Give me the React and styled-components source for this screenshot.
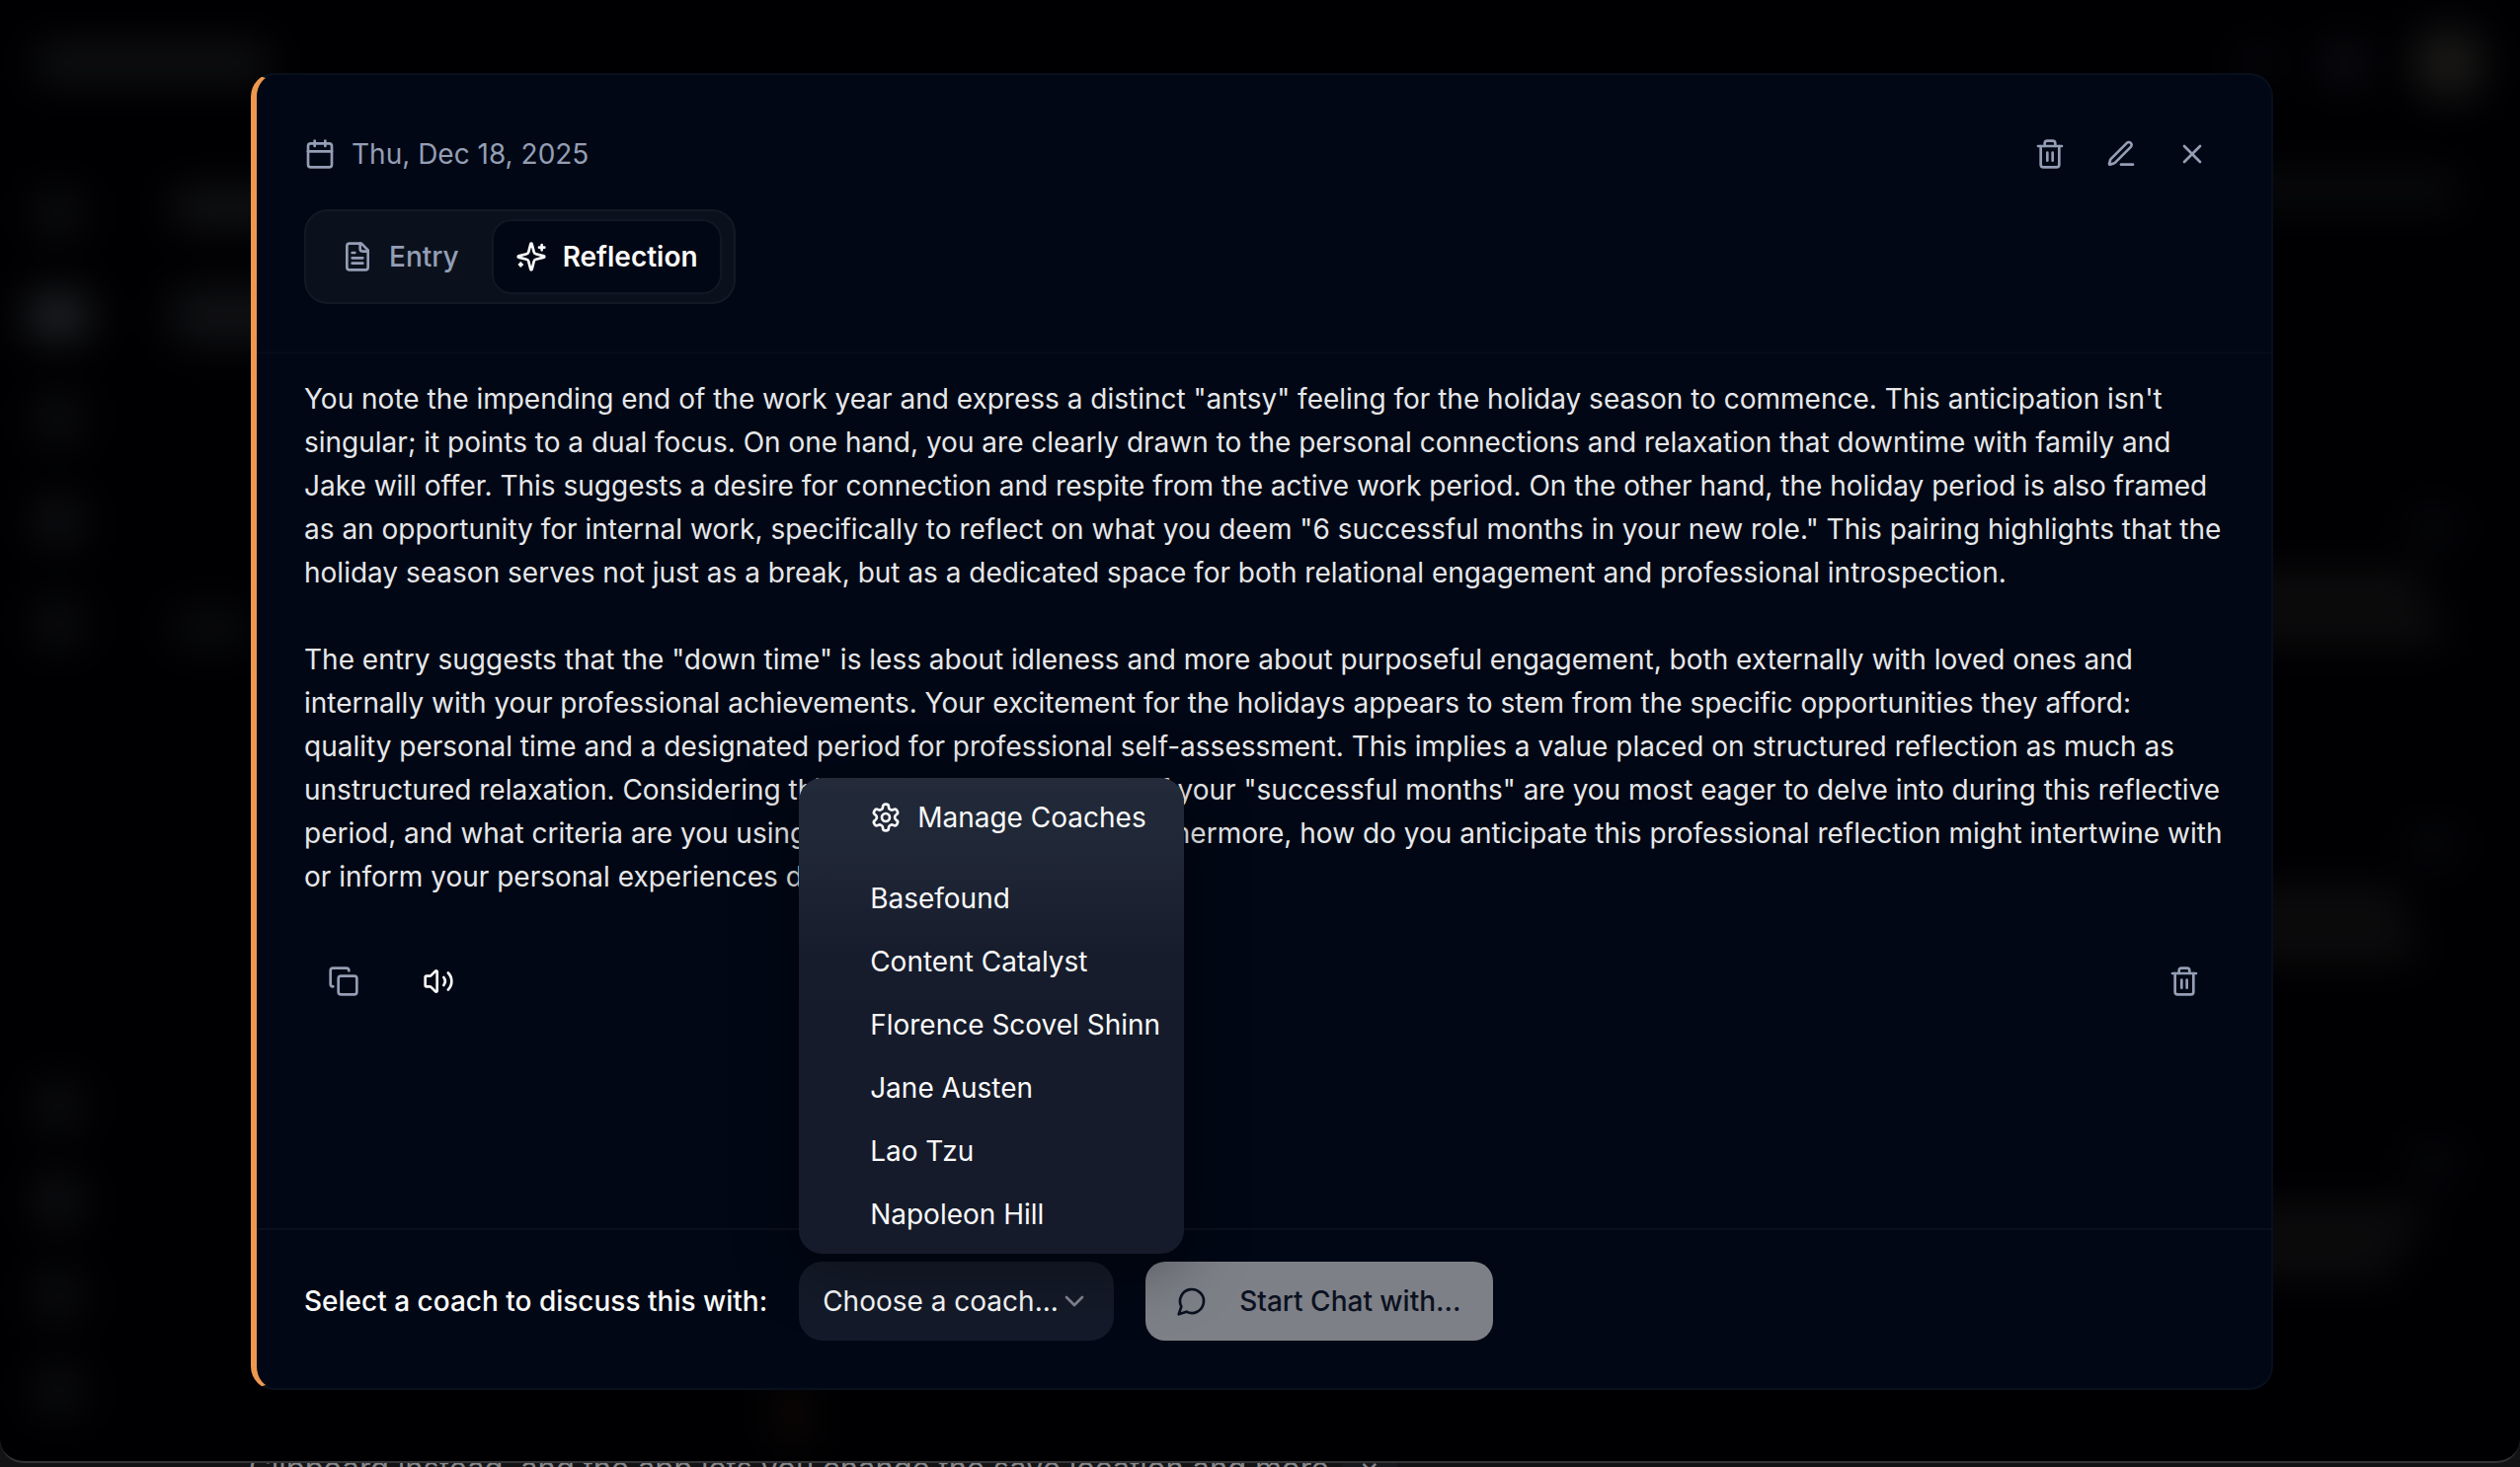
import React, { useState } from 'react';
import styled, { createGlobalStyle, css } from 'styled-components';
import { Calendar, Copy, Trash2, X, ChevronDown } from 'lucide-react';

const GlobalStyle = createGlobalStyle`
  * {
    box-sizing: border-box;
  }
  body {
    margin: 0;
    background: #131315;
    color: #fafafa;
    font-family: Inter, 'Liberation Sans', sans-serif;
    font-size: 28px;
    line-height: 44px;
  }
  button,
  select {
    font: inherit;
    color: inherit;
    border: none;
    background: none;
    padding: 0;
    margin: 0;
    cursor: pointer;
  }
`;

const Page = styled.div`
  display: flex;
  flex-direction: column;
  height: 100vh;
  overflow: hidden;
`;

const AppWindow = styled.div`
  position: relative;
  flex: 1;
  min-height: 0;
  display: flex;
  overflow: hidden;
  background: #000003;
  border-bottom: 2px solid #343436;
  border-radius: 0 0 24px 24px;
`;

const Behind = styled.div`
  height: 4px;
  overflow: hidden;
  display: flex;
  gap: 4px;
  padding-left: 252px;
  color: #86868a;
  font-size: 31px;
  line-height: 10px;
  white-space: nowrap;
`;

const BehindClose = styled.span`
  width: 56px;
  text-align: center;
  background: #17181d;
`;

/* blurred dashboard under the dialog */

const Backdrop = styled.div`
  position: absolute;
  inset: 0;
  display: flex;
  flex-direction: column;
  filter: blur(20px);
`;

const TopBar = styled.div`
  display: flex;
  align-items: center;
  gap: 48px;
  height: 128px;
  padding: 0 36px;
`;

const Columns = styled.div`
  display: flex;
  flex: 1;
  min-height: 0;
`;

const SideColumn = styled.div`
  display: flex;
  flex-direction: column;
  justify-content: space-between;
  width: 118px;
  padding: 64px 0 48px;
`;

const SideGroup = styled.div`
  display: flex;
  flex-direction: column;
  align-items: center;
  gap: ${(props) => props.$gap}px;
`;

const LeftColumn = styled.div`
  display: flex;
  flex-direction: column;
  flex: 1;
  gap: 64px;
  padding: 64px 0 16px 56px;
`;

const RightColumn = styled.div`
  display: flex;
  flex-direction: column;
  align-items: flex-end;
  padding: 48px 64px 0 0;
`;

const Spacer = styled.div`
  flex: ${(props) => (props.$size ? 'none' : 1)};
  height: ${(props) => props.$size || 0}px;
`;

const Blob = styled.div`
  flex: none;
  width: ${(props) => props.$w || 48}px;
  height: ${(props) => props.$h || 48}px;
  border-radius: ${(props) => props.$r || 12}px;
  background: ${(props) => props.$color || '#0c0d0f'};
`;

const BottomGlow = styled(Blob)`
  margin-left: 30%;
`;

const Card = styled.div`
  display: flex;
  flex-direction: column;
  gap: 12px;
  width: 256px;
  height: 337px;
`;

const CardDot = styled(Blob)`
  align-self: flex-end;
  margin-bottom: 16px;
`;

/* dialog */

const Overlay = styled.div`
  position: relative;
  flex: 1;
  display: flex;
  justify-content: center;
  padding: 74px 0 72px 4px;
`;

const Dialog = styled.section`
  display: flex;
  flex-direction: column;
  width: 100%;
  max-width: 2048px;
  background: #010714;
  border: 2px solid #080f1d;
  border-left: 6px solid #ee984f;
  border-radius: 24px;
`;

const DialogHeader = styled.header`
  display: flex;
  flex-direction: column;
  align-items: flex-start;
  gap: 24px;
  padding: 48px;
  border-bottom: 2px solid #050b18;
`;

const HeaderRow = styled.div`
  display: flex;
  justify-content: space-between;
  align-items: center;
  align-self: stretch;
  height: 64px;
`;

const DateLabel = styled.div`
  display: flex;
  align-items: center;
  gap: 16px;
  color: #949eb5;
`;

const Actions = styled.div`
  display: flex;
  gap: ${(props) => props.$gap}px;
`;

const IconButton = styled.button`
  display: flex;
  align-items: center;
  justify-content: center;
  width: ${(props) => (props.$wide ? 80 : 64)}px;
  height: ${(props) => (props.$wide ? 72 : 64)}px;
  color: ${(props) => (props.$bright ? '#fafafa' : '#949eb5')};
`;

const Tabs = styled.div`
  display: flex;
  align-items: center;
  gap: 9px;
  height: 96px;
  padding: 0 12px;
  background: #0b111c;
  border: 2px solid #131925;
  border-radius: 24px;
`;

const Tab = styled.button`
  display: flex;
  align-items: center;
  gap: 16px;
  height: 76px;
  padding: 0 22px;
  border: 2px solid transparent;
  border-radius: 20px;
  font-weight: 500;
  color: #949eb5;
  ${(props) =>
    props.$active &&
    css`
      font-weight: 600;
      color: #fafafa;
      background: #010714;
      border-color: #111724;
    `}
`;

const DialogBody = styled.div`
  flex: 1;
  min-height: 0;
  padding: 24px 48px 0;
`;

const Reflection = styled.div`
  display: flex;
  flex-direction: column;
  gap: 44px;
  color: #e6e7ea;
  p {
    margin: 0;
  }
`;

const BodyActions = styled.div`
  display: flex;
  justify-content: space-between;
  margin-top: 48px;
`;

const DialogFooter = styled.footer`
  display: flex;
  align-items: center;
  gap: 32px;
  padding: 32px 48px 48px;
  border-top: 2px solid #0a101c;
`;

const CoachLabel = styled.label`
  font-weight: 500;
`;

const SelectWrap = styled.div`
  position: relative;
  width: 319px;
`;

const CoachSelect = styled.select`
  appearance: none;
  display: block;
  width: 100%;
  height: 80px;
  padding: 0 48px 0 24px;
  background: #141a29;
  border-radius: 24px;
  outline: none;
`;

const SelectChevron = styled(ChevronDown)`
  position: absolute;
  top: 24px;
  right: 24px;
  color: #81858f;
  pointer-events: none;
`;

const Menu = styled.div`
  position: absolute;
  left: 0;
  bottom: calc(100% + 8px);
  z-index: 2;
  width: 390px;
  padding: 8px;
  border-radius: 24px;
  background: linear-gradient(#262b3a 0, #212938 16px, #202736 72px, #171d2d 170px, #151b2a 230px);
  box-shadow: 0 16px 64px rgba(0, 0, 0, 0.35);
`;

const MenuItem = styled.button`
  display: flex;
  align-items: center;
  gap: 16px;
  width: 100%;
  height: 64px;
  padding-left: 64px;
  border-radius: 16px;
  white-space: nowrap;
`;

const MenuGap = styled.div`
  height: 18px;
`;

const ChatButton = styled.button`
  display: flex;
  align-items: center;
  gap: 32px;
  height: 80px;
  padding: 0 32px 0 31px;
  border-radius: 20px;
  background: #7e8088;
  color: #0b1120;
  font-weight: 500;
`;

const Icon = ({ children }) => (
  <svg
    width="32"
    height="32"
    viewBox="0 0 24 24"
    fill="none"
    stroke="currentColor"
    strokeWidth="2"
    strokeLinecap="round"
    strokeLinejoin="round"
    aria-hidden="true"
  >
    {children}
  </svg>
);

const FileIcon = () => (
  <Icon>
    <path d="M15 2H6a2 2 0 0 0-2 2v16a2 2 0 0 0 2 2h12a2 2 0 0 0 2-2V7Z" />
    <path d="M14 2v4a2 2 0 0 0 2 2h4" />
    <path d="M10 9H8M16 13H8M16 17H8" />
  </Icon>
);

const SparklesIcon = () => (
  <Icon>
    <path d="M9.937 15.5A2 2 0 0 0 8.5 14.063l-6.135-1.582a.5.5 0 0 1 0-.962L8.5 9.936A2 2 0 0 0 9.937 8.5l1.582-6.135a.5.5 0 0 1 .963 0L14.063 8.5A2 2 0 0 0 15.5 9.937l6.135 1.581a.5.5 0 0 1 0 .964L15.5 14.063a2 2 0 0 0-1.437 1.437l-1.582 6.135a.5.5 0 0 1-.963 0z" />
    <path d="M20 3v4M22 5h-4M4 17v2M5 18H3" />
  </Icon>
);

const PenIcon = () => (
  <Icon>
    <path d="M12 20h9" />
    <path d="M16.376 3.622a1 1 0 0 1 3.002 3.002L7.368 18.635a2 2 0 0 1-.855.506l-2.872.838a.5.5 0 0 1-.62-.62l.838-2.872a2 2 0 0 1 .506-.854z" />
  </Icon>
);

const SpeakerIcon = () => (
  <Icon>
    <path d="M11 4.702a.705.705 0 0 0-1.203-.498L6.413 7.587A1.4 1.4 0 0 1 5.416 8H3a1 1 0 0 0-1 1v6a1 1 0 0 0 1 1h2.416a1.4 1.4 0 0 1 .997.413l3.383 3.384A.705.705 0 0 0 11 19.298z" />
    <path d="M16 9a5 5 0 0 1 0 6" />
    <path d="M19.364 18.364a9 9 0 0 0 0-12.728" />
  </Icon>
);

const GearIcon = () => (
  <Icon>
    <path d="M12.22 2h-.44a2 2 0 0 0-2 2v.18a2 2 0 0 1-1 1.73l-.43.25a2 2 0 0 1-2 0l-.15-.08a2 2 0 0 0-2.73.73l-.22.38a2 2 0 0 0 .73 2.73l.15.1a2 2 0 0 1 1 1.72v.51a2 2 0 0 1-1 1.74l-.15.09a2 2 0 0 0-.73 2.73l.22.38a2 2 0 0 0 2.73.73l.15-.08a2 2 0 0 1 2 0l.43.25a2 2 0 0 1 1 1.73V20a2 2 0 0 0 2 2h.44a2 2 0 0 0 2-2v-.18a2 2 0 0 1 1-1.73l.43-.25a2 2 0 0 1 2 0l.15.08a2 2 0 0 0 2.73-.73l.22-.39a2 2 0 0 0-.73-2.73l-.15-.08a2 2 0 0 1-1-1.74v-.5a2 2 0 0 1 1-1.74l.15-.09a2 2 0 0 0 .73-2.73l-.22-.38a2 2 0 0 0-2.73-.73l-.15.08a2 2 0 0 1-2 0l-.43-.25a2 2 0 0 1-1-1.73V4a2 2 0 0 0-2-2z" />
    <circle cx="12" cy="12" r="3" />
  </Icon>
);

const ChatIcon = () => (
  <Icon>
    <path d="M7.9 20A9 9 0 1 0 4 16.1L2 22Z" />
  </Icon>
);

const coaches = [
  'Basefound',
  'Content Catalyst',
  'Florence Scovel Shinn',
  'Jane Austen',
  'Lao Tzu',
  'Napoleon Hill',
];

const paragraphs = [
  `You note the impending end of the work year and express a distinct "antsy" feeling for the holiday season to commence. This anticipation isn't singular; it points to a dual focus. On one hand, you are clearly drawn to the personal connections and relaxation that downtime with family and Jake will offer. This suggests a desire for connection and respite from the active work period. On the other hand, the holiday period is also framed as an opportunity for internal work, specifically to reflect on what you deem "6 successful months in your new role." This pairing highlights that the holiday season serves not just as a break, but as a dedicated space for both relational engagement and professional introspection.`,
  `The entry suggests that the "down time" is less about idleness and more about purposeful engagement, both externally with loved ones and internally with your professional achievements. Your excitement for the holidays appears to stem from the specific opportunities they afford: quality personal time and a designated period for professional self-assessment. This implies a value placed on structured reflection as much as unstructured relaxation. Considering this, what specific aspects of your "successful months" are you most eager to delve into during this reflective period, and what criteria are you using to define this success? Furthermore, how do you anticipate this professional reflection might intertwine with or inform your personal experiences during the holidays?`,
];

const cardLines = [
  [224, 244],
  [204, 216],
  [224, 196],
];

const DashboardBackdrop = () => (
  <Backdrop aria-hidden="true">
    <TopBar>
      <Blob $w={236} $h={36} $color="#111213" />
      <Spacer />
      <Blob $w={36} $h={36} $color="#08090d" />
      <Blob $w={44} $h={44} $color="#0c0d12" />
      <Blob $w={72} $h={72} $r={36} $color="#1a1917" />
    </TopBar>
    <Columns>
      <SideColumn>
        <SideGroup $gap={56}>
          <Blob />
          <Blob $w={64} $color="#1e2023" />
          <Blob />
          <Blob $color="#0f1013" />
          <Blob />
        </SideGroup>
        <SideGroup $gap={48}>
          <Blob />
          <Blob $color="#0f1013" />
          <Blob />
          <Blob />
        </SideGroup>
      </SideColumn>
      <LeftColumn>
        <Blob $w={180} $h={36} $color="#131416" />
        <Blob $w={180} $h={56} $color="#101114" />
        <Spacer $size={140} />
        <Blob $w={80} $h={40} $color="#0a0b0d" />
        <Spacer />
        <BottomGlow $w={24} $h={64} $color="#130b05" />
      </LeftColumn>
      <RightColumn>
        <Blob $w={240} $h={32} $color="#0a0b0c" />
        <Spacer $size={309} />
        {cardLines.map(([first, second]) => (
          <Card key={first + second}>
            <CardDot $w={48} $h={36} $color="#07080c" />
            <Blob $w={first} $h={28} $color="#0f0f10" />
            <Blob $w={second} $h={28} $color="#0f0f10" />
          </Card>
        ))}
      </RightColumn>
    </Columns>
  </Backdrop>
);

const App = () => {
  const [tab, setTab] = useState('reflection');
  const [coach, setCoach] = useState('');
  const [menuOpen, setMenuOpen] = useState(true);

  const pick = (name) => {
    setCoach(name);
    setMenuOpen(false);
  };

  return (
    <Page>
      <GlobalStyle />
      <AppWindow>
        <DashboardBackdrop />
        <Overlay>
          <Dialog role="dialog" aria-label="Journal reflection">
            <DialogHeader>
              <HeaderRow>
                <DateLabel>
                  <Calendar size={32} />
                  <span>Thu, Dec 18, 2025</span>
                </DateLabel>
                <Actions $gap={8}>
                  <IconButton aria-label="Delete entry">
                    <Trash2 size={32} />
                  </IconButton>
                  <IconButton aria-label="Edit entry">
                    <PenIcon />
                  </IconButton>
                  <IconButton aria-label="Close">
                    <X size={32} />
                  </IconButton>
                </Actions>
              </HeaderRow>
              <Tabs role="tablist">
                <Tab
                  role="tab"
                  aria-selected={tab === 'entry'}
                  $active={tab === 'entry'}
                  onClick={() => setTab('entry')}
                >
                  <FileIcon />
                  Entry
                </Tab>
                <Tab
                  role="tab"
                  aria-selected={tab === 'reflection'}
                  $active={tab === 'reflection'}
                  onClick={() => setTab('reflection')}
                >
                  <SparklesIcon />
                  Reflection
                </Tab>
              </Tabs>
            </DialogHeader>
            <DialogBody>
              <Reflection>
                {paragraphs.map((text) => (
                  <p key={text}>{text}</p>
                ))}
              </Reflection>
              <BodyActions>
                <Actions $gap={16}>
                  <IconButton $wide aria-label="Copy reflection">
                    <Copy size={32} />
                  </IconButton>
                  <IconButton $wide $bright aria-label="Read aloud">
                    <SpeakerIcon />
                  </IconButton>
                </Actions>
                <IconButton $wide aria-label="Delete reflection">
                  <Trash2 size={32} />
                </IconButton>
              </BodyActions>
            </DialogBody>
            <DialogFooter>
              <CoachLabel htmlFor="coach">
                Select a coach to discuss this with:
              </CoachLabel>
              <SelectWrap>
                <CoachSelect
                  id="coach"
                  value={coach}
                  onChange={(e) => pick(e.target.value)}
                >
                  <option value="">Choose a coach...</option>
                  {coaches.map((name) => (
                    <option key={name} value={name}>
                      {name}
                    </option>
                  ))}
                </CoachSelect>
                <SelectChevron size={32} />
                {menuOpen && (
                  <Menu>
                    <MenuItem>
                      <GearIcon />
                      Manage Coaches
                    </MenuItem>
                    <MenuGap />
                    {coaches.map((name) => (
                      <MenuItem key={name} onClick={() => pick(name)}>
                        {name}
                      </MenuItem>
                    ))}
                  </Menu>
                )}
              </SelectWrap>
              <ChatButton>
                <ChatIcon />
                Start Chat with...
              </ChatButton>
            </DialogFooter>
          </Dialog>
        </Overlay>
      </AppWindow>
      <Behind aria-hidden="true">
        <span>
          Clipboard instead, and the app lets you change the save location and
          more.
        </span>
        <BehindClose>×</BehindClose>
      </Behind>
    </Page>
  );
};

export default App;
